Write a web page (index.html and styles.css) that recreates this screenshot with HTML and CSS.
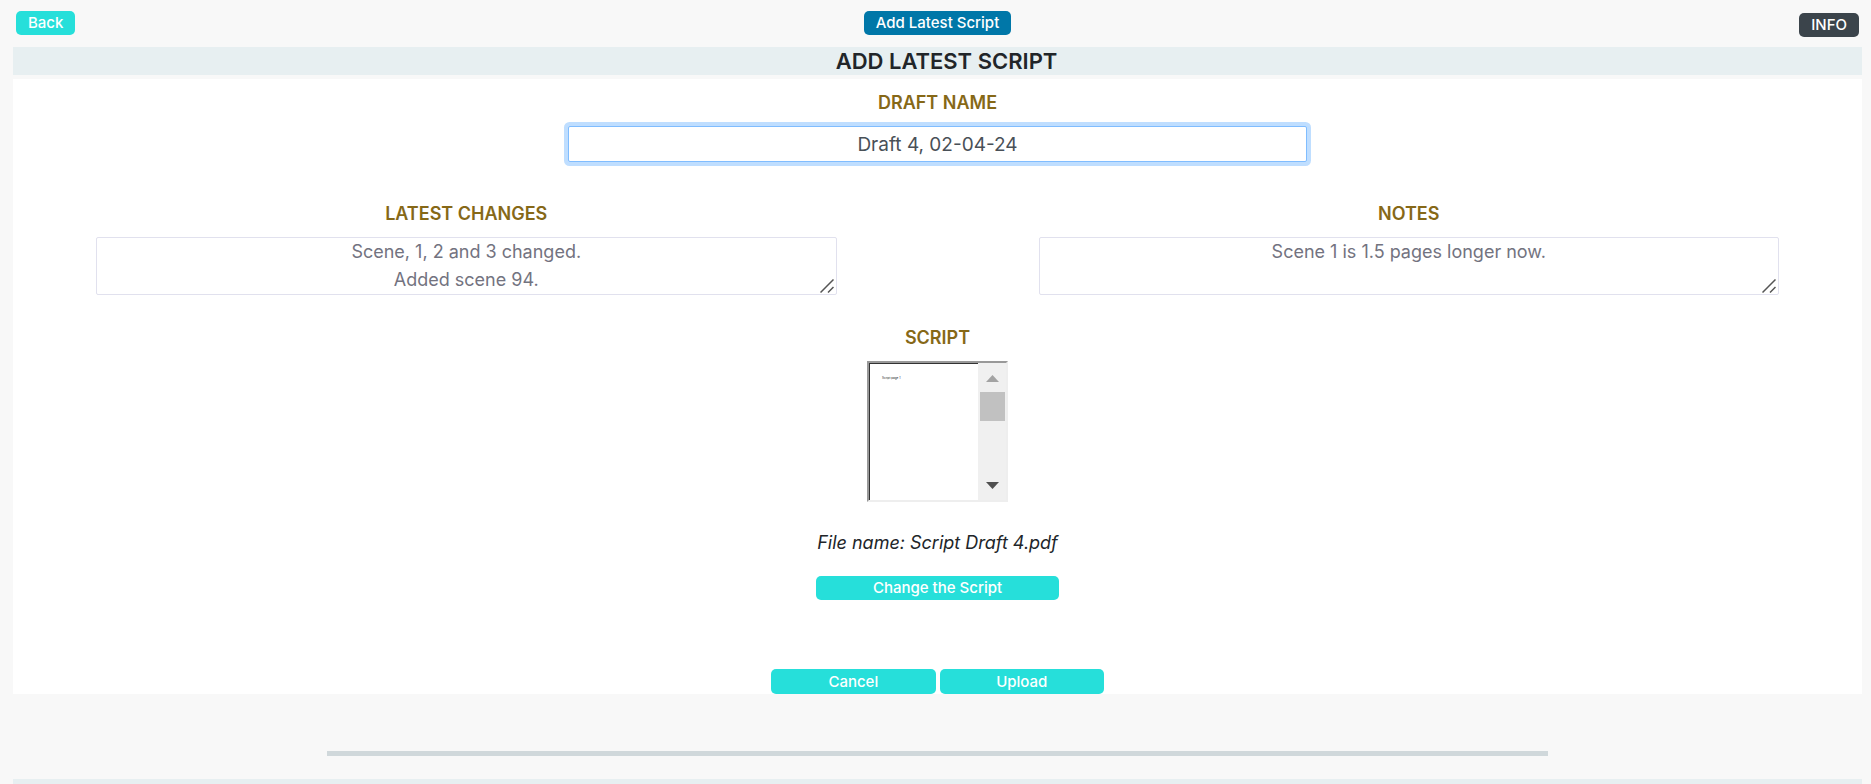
FILE: index.html
```html
<!DOCTYPE html>
<html lang="en">
<head>
<meta charset="utf-8">
<meta name="viewport" content="width=device-width, initial-scale=1">
<title>Add Latest Script</title>
<link rel="stylesheet" href="styles.css">
</head>
<body>
<header class="toolbar">
  <button type="button" class="btn btn-teal toolbar-back">Back</button>
  <button type="button" class="btn btn-blue">Add Latest Script</button>
  <button type="button" class="btn btn-dark toolbar-info">INFO</button>
</header>
<main>
  <h1 class="band title">ADD LATEST SCRIPT</h1>
  <form class="panel">
    <div class="field">
      <label class="label" for="draft">DRAFT NAME</label>
      <input class="control control-active" id="draft" type="text" value="Draft 4, 02-04-24">
    </div>
    <div class="columns">
      <div class="field">
        <label class="label" for="changes">LATEST CHANGES</label>
        <div class="area">
          <textarea class="control control-area" id="changes" rows="2">Scene, 1, 2 and 3 changed.
Added scene 94.</textarea>
          <svg class="grip" viewBox="0 0 14 14" aria-hidden="true"><path d="M.5 13.5 13.5.5M8 13.5l5.500-5.500"/></svg>
        </div>
      </div>
      <div class="field">
        <label class="label" for="notes">NOTES</label>
        <div class="area">
          <textarea class="control control-area" id="notes" rows="2">Scene 1 is 1.5 pages longer now.</textarea>
          <svg class="grip" viewBox="0 0 14 14" aria-hidden="true"><path d="M.5 13.5 13.5.5M8 13.5l5.500-5.500"/></svg>
        </div>
      </div>
    </div>
    <section class="field">
      <h2 class="label">SCRIPT</h2>
      <div class="preview">
        <div class="preview-page">Script page 1</div>
        <div class="scrollbar" aria-hidden="true">
          <svg class="arrow arrow-up" viewBox="0 0 13 7"><path d="M0 7 6.500 0 13 7z"/></svg>
          <div class="thumb"></div>
          <svg class="arrow arrow-down" viewBox="0 0 13 7"><path d="M0 0h13L6.500 7z"/></svg>
        </div>
      </div>
    </section>
    <p class="filename">File name: Script Draft 4.pdf</p>
    <button type="button" class="btn btn-teal btn-change">Change the Script</button>
    <div class="actions">
      <button type="button" class="btn btn-teal">Cancel</button>
      <button type="submit" class="btn btn-teal">Upload</button>
    </div>
  </form>
  <hr class="divider">
  <div class="band band-next"></div>
</main>
</body>
</html>
```
FILE: styles.css
```css
* {
  box-sizing: border-box;
}

body {
  margin: 0;
  padding: 11px 9px 0 13px;
  background: #f8f8f8;
  color: #212529;
  font-family: Inter, "Liberation Sans", sans-serif;
  font-size: 18px;
  line-height: 28px;
}

.toolbar {
  display: grid;
  grid-template-columns: 1fr auto 1fr;
  align-items: start;
  height: 26px;
  margin-bottom: 10px;
  padding: 0 3px;
}

.toolbar-back {
  justify-self: start;
}

.toolbar-info {
  justify-self: end;
  align-self: end;
}

.btn {
  height: 24px;
  padding: 0 12px;
  border: 0;
  border-radius: 5px;
  color: #fff;
  font-family: inherit;
  font-size: 15px;
  font-weight: 500;
  line-height: 24px;
}

.btn-teal {
  background: #26dfda;
}

.btn-blue {
  background: #0077a8;
}

.btn-dark {
  background: #3b444b;
}

.band {
  background: #e7eff1;
}

.title {
  margin: 0 0 4px;
  padding-left: 18px;
  font-size: 22px;
  font-weight: 600;
  line-height: 28px;
  text-align: center;
}

.panel {
  display: flex;
  flex-direction: column;
  align-items: center;
  padding-top: 10px;
  background: #fff;
}

.field {
  display: flex;
  flex-direction: column;
  align-items: center;
  gap: 9px;
  width: 100%;
}

.label {
  margin: 0;
  color: #866817;
  font-size: 18px;
  font-weight: 600;
  line-height: 28px;
}

.control {
  display: block;
  width: 40%;
  height: 36px;
  padding: 0 12px;
  border: 1px solid #e1e1ee;
  border-radius: 2px;
  outline: 0;
  background: #fff;
  color: #73737f;
  font: inherit;
  text-align: center;
}

.control-active {
  border-color: #80bdff;
  box-shadow: 0 0 0 4px #bfdeff;
  color: #495057;
  font-size: 19px;
}

.columns {
  display: grid;
  grid-template-columns: 1fr 1fr;
  gap: 36px;
  width: 100%;
  margin: 38px 0 29px;
}

.columns .field {
  padding: 0 83px;
}

.area {
  position: relative;
  width: 100%;
}

.control-area {
  width: 100%;
  height: 58px;
  overflow: hidden;
  resize: none;
}

.grip {
  position: absolute;
  right: 3px;
  bottom: 2px;
  width: 14px;
  height: 14px;
  fill: none;
  stroke: #555;
  stroke-width: 1.5;
}

.preview {
  display: flex;
  width: 141px;
  height: 141px;
  border: 2px solid;
  border-color: #999 #eee #eee #999;
}

.preview-page {
  flex: 1;
  padding: 12px;
  border: solid #333;
  border-width: 1px 0 0 1px;
  font-size: 3px;
  line-height: 4px;
  white-space: nowrap;
}

.scrollbar {
  display: flex;
  flex-direction: column;
  align-items: center;
  width: 28px;
  padding: 12px 0 11px;
  background: #f0f0f0;
}

.arrow {
  width: 13px;
  height: 7px;
}

.arrow-up {
  fill: #a3a3a3;
}

.arrow-down {
  margin-top: auto;
  fill: #505050;
}

.thumb {
  width: 25px;
  height: 29px;
  margin-top: 10px;
  background: #c1c1c1;
}

.filename {
  margin: 27px 0 19px;
  font-style: italic;
}

.btn-change {
  width: 243px;
}

.actions {
  display: grid;
  grid-template-columns: 1fr 1fr;
  gap: 4px;
  width: 18%;
  margin-top: 69px;
}

.actions .btn {
  height: 25px;
}

.divider {
  width: 66%;
  height: 5px;
  margin: 57px auto 23px;
  border: 0;
  background: #d0d8db;
}

.band-next {
  height: 5px;
}
```
